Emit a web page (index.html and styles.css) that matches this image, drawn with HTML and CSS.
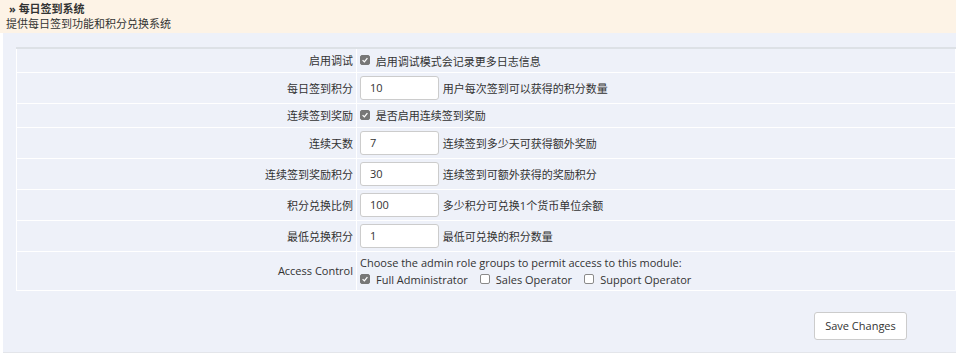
FILE: index.html
```html
<!DOCTYPE html>
<html lang="zh-CN">
<head>
    <meta charset="UTF-8">
    <title>每日签到系统</title>
    <link rel="stylesheet" href="styles.css">
</head>
<body>
    <div class="module-head">
        <h2 class="module-title">» 每日签到系统</h2>
        <p class="module-desc">提供每日签到功能和积分兑换系统</p>
    </div>

    <div class="module-body">
        <form class="settings-form">
            <table class="settings">
                <tr class="row-short">
                    <td class="label">启用调试</td>
                    <td class="field">
                        <span class="check checked"><svg viewBox="0 0 10 10"><path d="M2 5.2 L4.2 7.3 L8 2.6" /></svg></span>
                        <span class="hint">启用调试模式会记录更多日志信息</span>
                    </td>
                </tr>
                <tr>
                    <td class="label">每日签到积分</td>
                    <td class="field">
                        <input type="text" class="text-input" value="10">
                        <span class="hint">用户每次签到可以获得的积分数量</span>
                    </td>
                </tr>
                <tr class="row-short">
                    <td class="label">连续签到奖励</td>
                    <td class="field">
                        <span class="check checked"><svg viewBox="0 0 10 10"><path d="M2 5.2 L4.2 7.3 L8 2.6" /></svg></span>
                        <span class="hint">是否启用连续签到奖励</span>
                    </td>
                </tr>
                <tr>
                    <td class="label">连续天数</td>
                    <td class="field">
                        <input type="text" class="text-input" value="7">
                        <span class="hint">连续签到多少天可获得额外奖励</span>
                    </td>
                </tr>
                <tr>
                    <td class="label">连续签到奖励积分</td>
                    <td class="field">
                        <input type="text" class="text-input" value="30">
                        <span class="hint">连续签到可额外获得的奖励积分</span>
                    </td>
                </tr>
                <tr>
                    <td class="label">积分兑换比例</td>
                    <td class="field">
                        <input type="text" class="text-input" value="100">
                        <span class="hint">多少积分可兑换1个货币单位余额</span>
                    </td>
                </tr>
                <tr>
                    <td class="label">最低兑换积分</td>
                    <td class="field">
                        <input type="text" class="text-input" value="1">
                        <span class="hint">最低可兑换的积分数量</span>
                    </td>
                </tr>
                <tr class="row-access">
                    <td class="label">Access Control</td>
                    <td class="field">
                        <div class="access-note">Choose the admin role groups to permit access to this module:</div>
                        <div class="roles">
                            <label class="role"><span class="check checked"><svg viewBox="0 0 10 10"><path d="M2 5.2 L4.2 7.3 L8 2.6" /></svg></span>Full Administrator</label>
                            <label class="role"><span class="check"></span>Sales Operator</label>
                            <label class="role"><span class="check"></span>Support Operator</label>
                        </div>
                    </td>
                </tr>
            </table>

            <div class="actions">
                <button type="button" class="btn">Save Changes</button>
            </div>
        </form>
    </div>
</body>
</html>
```

FILE: styles.css
```css
* {
    margin: 0;
    padding: 0;
    box-sizing: border-box;
}

body {
    font-family: 'Open Sans', 'Noto Sans CJK SC', sans-serif;
    font-size: 11px;
    color: #333;
    background: #fff;
    overflow: hidden;
}

.module-head {
    background: #fdf3e6;
    height: 33px;
    padding: 1px 6px 0;
}

.module-title {
    font-size: 11px;
    font-weight: bold;
    line-height: 15px;
    padding-left: 3px;
}

.module-desc {
    line-height: 15px;
}

.module-body {
    margin-left: 3px;
    background: #eef1f9;
    height: 320px;
    padding: 14px 0 0 13px;
    border-bottom: 1px solid #e3e5ea;
}

.settings {
    width: 100%;
    border-collapse: collapse;
    border-top: 2px solid #dde1e6;
    border-left: 1px solid #dde1e6;
    border-bottom: 1px solid #dde1e6;
}

.settings td {
    border: 1px solid #fff;
    height: 31px;
    padding: 3px 3px;
    vertical-align: middle;
}

.settings .row-short td {
    height: 24px;
    padding: 0 3px;
}

.settings .row-access td {
    height: 39px;
    padding: 2px 3px;
}

.settings .label {
    width: 340px;
    text-align: right;
    white-space: nowrap;
}

.field {
    white-space: nowrap;
}

.text-input {
    width: 79px;
    height: 24px;
    padding: 0 9px;
    border: 1px solid #ccc;
    border-radius: 3px;
    background: #fff;
    color: #333;
    font-family: inherit;
    font-size: 11px;
    vertical-align: middle;
    margin-right: 1px;
}

.hint {
    vertical-align: middle;
}

.check {
    display: inline-block;
    width: 10px;
    height: 10px;
    border: 1px solid #8a8a8a;
    border-radius: 2px;
    background: #fff;
    vertical-align: middle;
    margin: 0 3px 0 0;
    position: relative;
    top: -1px;
}

.check.checked {
    background: #777;
    border-color: #777;
}

.check svg {
    display: block;
    width: 8px;
    height: 8px;
}

.check path {
    fill: none;
    stroke: #fff;
    stroke-width: 1.6;
}

.access-note {
    line-height: 17px;
}

.roles {
    display: flex;
    gap: 12px;
    line-height: 17px;
}

.role {
    display: flex;
    align-items: center;
}

.role .check {
    top: 0;
    margin-right: 6px;
}

.actions {
    display: flex;
    justify-content: flex-end;
    padding: 21px 49px 0 0;
}

.btn {
    width: 93px;
    height: 28px;
    background: #fff;
    border: 1px solid #ccc;
    border-radius: 3px;
    color: #333;
    font-family: inherit;
    font-size: 11px;
    cursor: pointer;
}
```
